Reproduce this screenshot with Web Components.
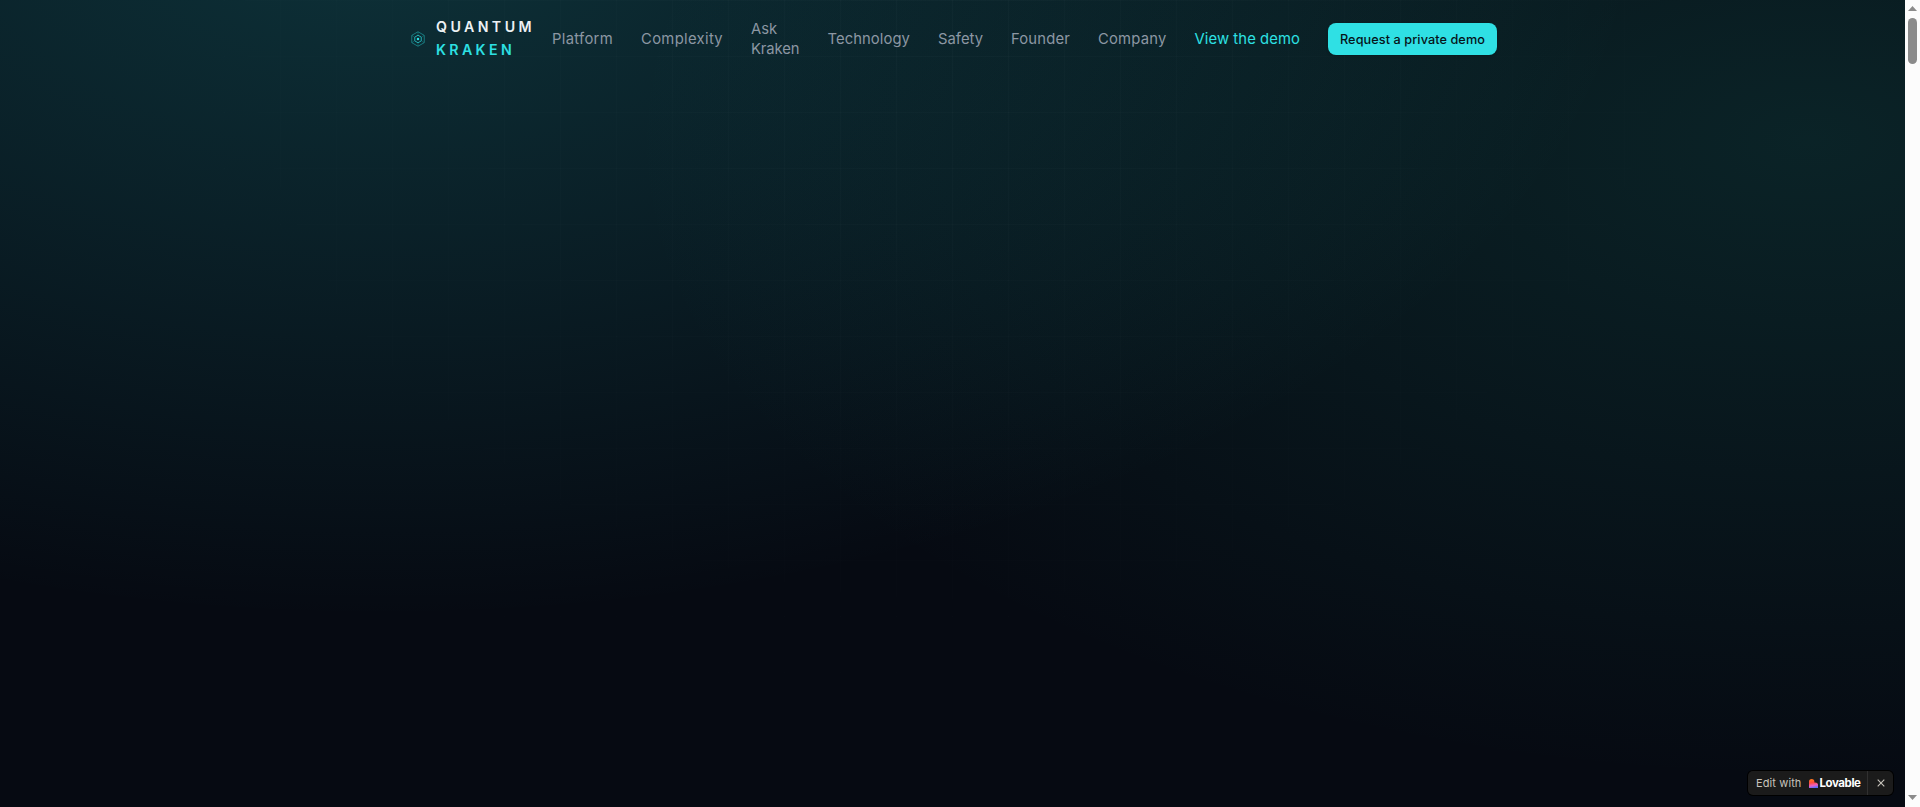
<!DOCTYPE html>
<html lang="en"><head><meta charset="utf-8"><title>Quantum Kraken</title>
<style>html,body{margin:0;height:100%;overflow:hidden;background:#060a12}body{font-family:Inter,"Open Sans",sans-serif}</style></head>
<body><qk-page></qk-page>
<script>
const define=(name,html,setup)=>customElements.define(name,class extends HTMLElement{
  constructor(){super();this.attachShadow({mode:'open'}).innerHTML=html}
  connectedCallback(){if(setup)setup(this)}
});
// Tracks the label so that it fills the width it is given.
define('fit-text',`<style>:host{display:block;white-space:nowrap}span{display:inline-block}</style><span><slot></slot></span>`,el=>{
  const w=+el.getAttribute('width'),s=el.shadowRoot.querySelector('span');
  el.style.width=w+'px';
  s.style.letterSpacing=(w-s.getBoundingClientRect().width)/el.textContent.length+'px';
});
define('qk-logo',`<style>
:host{display:flex;align-items:center;gap:10px;width:124px;flex:none}
svg{width:16px;height:16px;flex:none}
.n{font:600 14.2px/23px Inter,sans-serif;color:#edf1f4;margin-top:-2px}
.k{color:#2de0e3}
</style><svg viewBox="0 0 32 32" fill="none" stroke="#22aeb2">
<path d="M16 1.500 28.500 8.700v14.600L16 30.500 3.500 23.300V8.700Z" stroke-width="1.600" opacity=".75"/>
<path d="M16 8.500 22.500 12.200v7.600L16 23.500 9.500 19.800V12.200Z" stroke-width="2"/>
<path d="M16 2v6M4 9l5 3M28 9l-5 3M4 23l5-3M28 23l-5-3M16 24v6" stroke-width="1" opacity=".6"/>
<circle cx="16" cy="16" r="2.500" fill="#2de0e3" stroke="none"/></svg>
<div class="n"><fit-text width="99">QUANTUM</fit-text><fit-text class="k" width="79">KRAKEN</fit-text></div>`);
define('nav-link',`<style>:host{display:block;flex:none;font-size:14.8px;line-height:20px;color:#8c97a3}:host([active]){color:#2de0e3}</style><slot></slot>`);
define('cta-button',`<style>:host{display:flex;flex:none;box-sizing:border-box;width:169px;height:32px;padding-left:12px;align-items:center;border-radius:8px;background:#2fe0e4;color:#061318;font-size:12.700px;font-weight:500;box-shadow:0 1px 3px #0003}</style><slot></slot>`);
define('site-nav',`<style>:host{display:flex;align-items:center;height:78px;padding-left:410px;position:relative}nav{display:flex;align-items:center;gap:28px;margin-left:18px}</style>
<qk-logo></qk-logo><nav>
<nav-link><fit-text width="61">Platform</fit-text></nav-link>
<nav-link><fit-text width="82">Complexity</fit-text></nav-link>
<nav-link><fit-text width="26">Ask</fit-text><fit-text width="48.500">Kraken</fit-text></nav-link>
<nav-link><fit-text width="82.500">Technology</fit-text></nav-link>
<nav-link><fit-text width="45">Safety</fit-text></nav-link>
<nav-link><fit-text width="59">Founder</fit-text></nav-link>
<nav-link><fit-text width="68.500">Company</fit-text></nav-link>
<nav-link active><fit-text width="105.500">View the demo</fit-text></nav-link>
<cta-button><fit-text width="145">Request a private demo</fit-text></cta-button></nav>`);
define('hero-area',`<style>
:host{display:block;position:relative;height:100%;background:
radial-gradient(1180px 640px at 1810px 140px,rgba(34,170,152,.155),transparent),
radial-gradient(1260px 700px at 381px -81px,rgba(45,224,228,.19),transparent),#060a12}
.grid{position:absolute;inset:0;background:linear-gradient(90deg,rgba(255,255,255,.018) 1px,transparent 1px) 0 0/56px 56px,linear-gradient(rgba(255,255,255,.018) 1px,transparent 1px) 0 0/56px 56px;-webkit-mask-image:radial-gradient(ellipse at 50% 0,#000,transparent 75%);mask-image:radial-gradient(ellipse at 50% 0,#000,transparent 75%)}
</style><div class="grid"></div><slot></slot>`);
define('edit-badge',`<style>
:host{position:absolute;right:12px;bottom:12px;display:flex;box-sizing:border-box;width:145px;height:24px;border-radius:5px;background:#1b1b1b;box-shadow:0 0 0 1px #000;color:#c8c4bc;font-size:11px;line-height:24px}
.m{display:flex;align-items:center;width:120px;box-sizing:border-box;padding-left:8px;border-right:1px solid #303030}
.logo{width:9px;height:9px;margin-left:7px}
b{color:#fff;font-weight:700;margin-left:2px;font-size:11.500px}
.x{flex:1;display:flex;align-items:center;justify-content:center}
</style><div class="m"><fit-text width="45.500">Edit with</fit-text>
<svg class="logo" viewBox="0 0 20 20"><defs><linearGradient id="g" x1=".3" y1="0" x2=".5" y2="1"><stop stop-color="#ff7a1c"/><stop offset=".4" stop-color="#ff4b3e"/><stop offset=".72" stop-color="#ee5fc0"/><stop offset="1" stop-color="#596dff"/></linearGradient></defs><path d="M0 6a6 6 0 0 1 12 0v2h2a6 6 0 0 1 6 6v6H0Z" fill="url(#g)"/></svg>
<b><fit-text width="41">Lovable</fit-text></b></div>
<div class="x"><svg width="8" height="8" viewBox="0 0 8 8" stroke="#c8c4bc" stroke-width="1.100"><path d="m.7.7 6.600 6.600M7.300.7.7 7.300"/></svg></div>`);
define('scroll-bar',`<style>:host{display:flex;flex-direction:column;align-items:center;background:#fcfcfc}svg{display:block;flex:none}.u{margin-top:6px}.t{width:9px;height:46px;margin-top:7px;border-radius:5px;background:#8b8b8b}.d{margin-top:auto;margin-bottom:7px}</style>
<svg class="u" width="9" height="5"><path d="M4.500 0 9 5H0Z" fill="#8b8b8b"/></svg><div class="t"></div><svg class="d" width="9" height="5"><path d="M0 0h9L4.500 5Z" fill="#8b8b8b"/></svg>`);
define('qk-page',`<style>:host{display:grid;grid-template-columns:1fr 15px;height:100vh}</style><hero-area><site-nav></site-nav><edit-badge></edit-badge></hero-area><scroll-bar></scroll-bar>`);
</script></body></html>
